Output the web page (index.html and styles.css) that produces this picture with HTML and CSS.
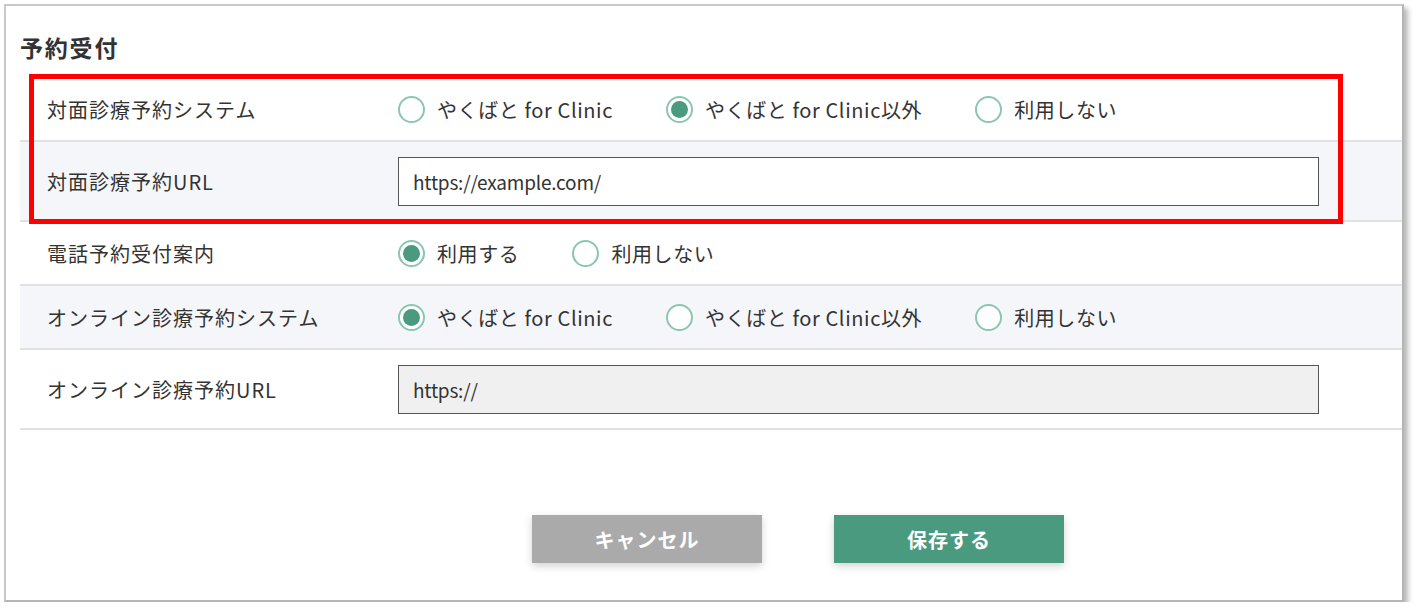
FILE: index.html
```html
<!DOCTYPE html>
<html>
<head>
	<meta charset="utf-8">
	<title>予約受付</title>
	<link rel="stylesheet" href="styles.css">
</head>
<body>
	<div class="frame">
		<h2 class="section-title">予約受付</h2>

		<div class="form-table">
			<div class="form-row">
				<div class="form-label">対面診療予約システム</div>
				<div class="form-field">
					<label class="radio"><input type="radio" name="visit"><span>やくばと for Clinic</span></label>
					<label class="radio"><input type="radio" name="visit" checked><span>やくばと for Clinic以外</span></label>
					<label class="radio"><input type="radio" name="visit"><span>利用しない</span></label>
				</div>
			</div>
			<div class="form-row tall alt">
				<div class="form-label">対面診療予約URL</div>
				<div class="form-field">
					<input class="text-input" type="text" value="https://example.com/">
				</div>
			</div>
			<div class="form-row">
				<div class="form-label">電話予約受付案内</div>
				<div class="form-field">
					<label class="radio"><input type="radio" name="tel" checked><span>利用する</span></label>
					<label class="radio"><input type="radio" name="tel"><span>利用しない</span></label>
				</div>
			</div>
			<div class="form-row alt">
				<div class="form-label">オンライン診療予約システム</div>
				<div class="form-field">
					<label class="radio"><input type="radio" name="online" checked><span>やくばと for Clinic</span></label>
					<label class="radio"><input type="radio" name="online"><span>やくばと for Clinic以外</span></label>
					<label class="radio"><input type="radio" name="online"><span>利用しない</span></label>
				</div>
			</div>
			<div class="form-row tall">
				<div class="form-label">オンライン診療予約URL</div>
				<div class="form-field">
					<input class="text-input" type="text" value="https://" disabled>
				</div>
			</div>
		</div>

		<div class="buttons">
			<button class="btn btn-cancel" type="button">キャンセル</button>
			<button class="btn btn-save" type="submit">保存する</button>
		</div>

		<!-- annotation -->
		<div class="highlight"></div>
	</div>
</body>
</html>
```

FILE: styles.css
```css
body {
	margin: 0;
	background: #fff;
	font-family: "Noto Sans CJK JP", "Noto Sans", sans-serif;
	color: #333;
}

.frame {
	position: relative;
	box-sizing: border-box;
	margin: 4px 0 0 4px;
	width: 1400px;
	height: 598px;
	padding: 23px 0 0 14px;
	border: 2px solid #c9c9c9;
	border-right-color: #b5b5b5;
	border-bottom-color: #b5b5b5;
	background: #fff;
	box-shadow: 4px 4px 5px rgba(0, 0, 0, 0.28);
}

.section-title {
	margin: 0 0 13px;
	font-size: 23px;
	line-height: 36px;
	font-weight: bold;
	letter-spacing: 1.8px;
	color: #333;
}

.form-row {
	display: flex;
	align-items: center;
	height: 62px;
	border-bottom: 2px solid #e1e1e4;
}

.form-row.tall {
	height: 78px;
}

.form-row.alt {
	background: #f5f6fa;
}

.form-label {
	width: 351px;
	padding-left: 27px;
	flex-shrink: 0;
	font-size: 20px;
	letter-spacing: 1px;
}

.form-field {
	display: flex;
	align-items: center;
	gap: 53px;
	flex: 1;
}

.radio {
	display: flex;
	align-items: center;
	gap: 12px;
	font-size: 20px;
	letter-spacing: 0.6px;
	cursor: pointer;
}

.radio input {
	appearance: none;
	-webkit-appearance: none;
	margin: 0;
	box-sizing: border-box;
	width: 27px;
	height: 27px;
	border: 2px solid #8cc6b0;
	border-radius: 50%;
	background: #fff;
	display: flex;
	align-items: center;
	justify-content: center;
}

.radio input:checked::after {
	content: "";
	width: 17px;
	height: 17px;
	border-radius: 50%;
	background: #4a9a80;
}

.text-input {
	box-sizing: border-box;
	width: 921px;
	height: 49px;
	padding: 0 14px;
	border: 1px solid #555;
	background: #fff;
	font-family: "Noto Sans CJK JP", "Noto Sans", sans-serif;
	font-size: 19px;
	letter-spacing: -0.2px;
	color: #333;
	outline: none;
}

.text-input:disabled {
	background: #f0f0f0;
	color: #333;
}

.buttons {
	display: flex;
	gap: 72px;
	margin-top: 85px;
	padding-left: 512px;
}

.btn {
	width: 230px;
	height: 48px;
	border: none;
	color: #fff;
	font-family: "Noto Sans CJK JP", "Noto Sans", sans-serif;
	font-size: 20px;
	font-weight: bold;
	letter-spacing: 1px;
	box-shadow: 0 3px 8px rgba(0, 0, 0, 0.18);
	cursor: pointer;
}

.btn-cancel {
	background: #aaaaaa;
}

.btn-save {
	background: #4a9a80;
}

.highlight {
	position: absolute;
	left: 23px;
	top: 68px;
	width: 1314px;
	height: 150px;
	box-sizing: border-box;
	border: 5px solid #ff0000;
	pointer-events: none;
}
```
